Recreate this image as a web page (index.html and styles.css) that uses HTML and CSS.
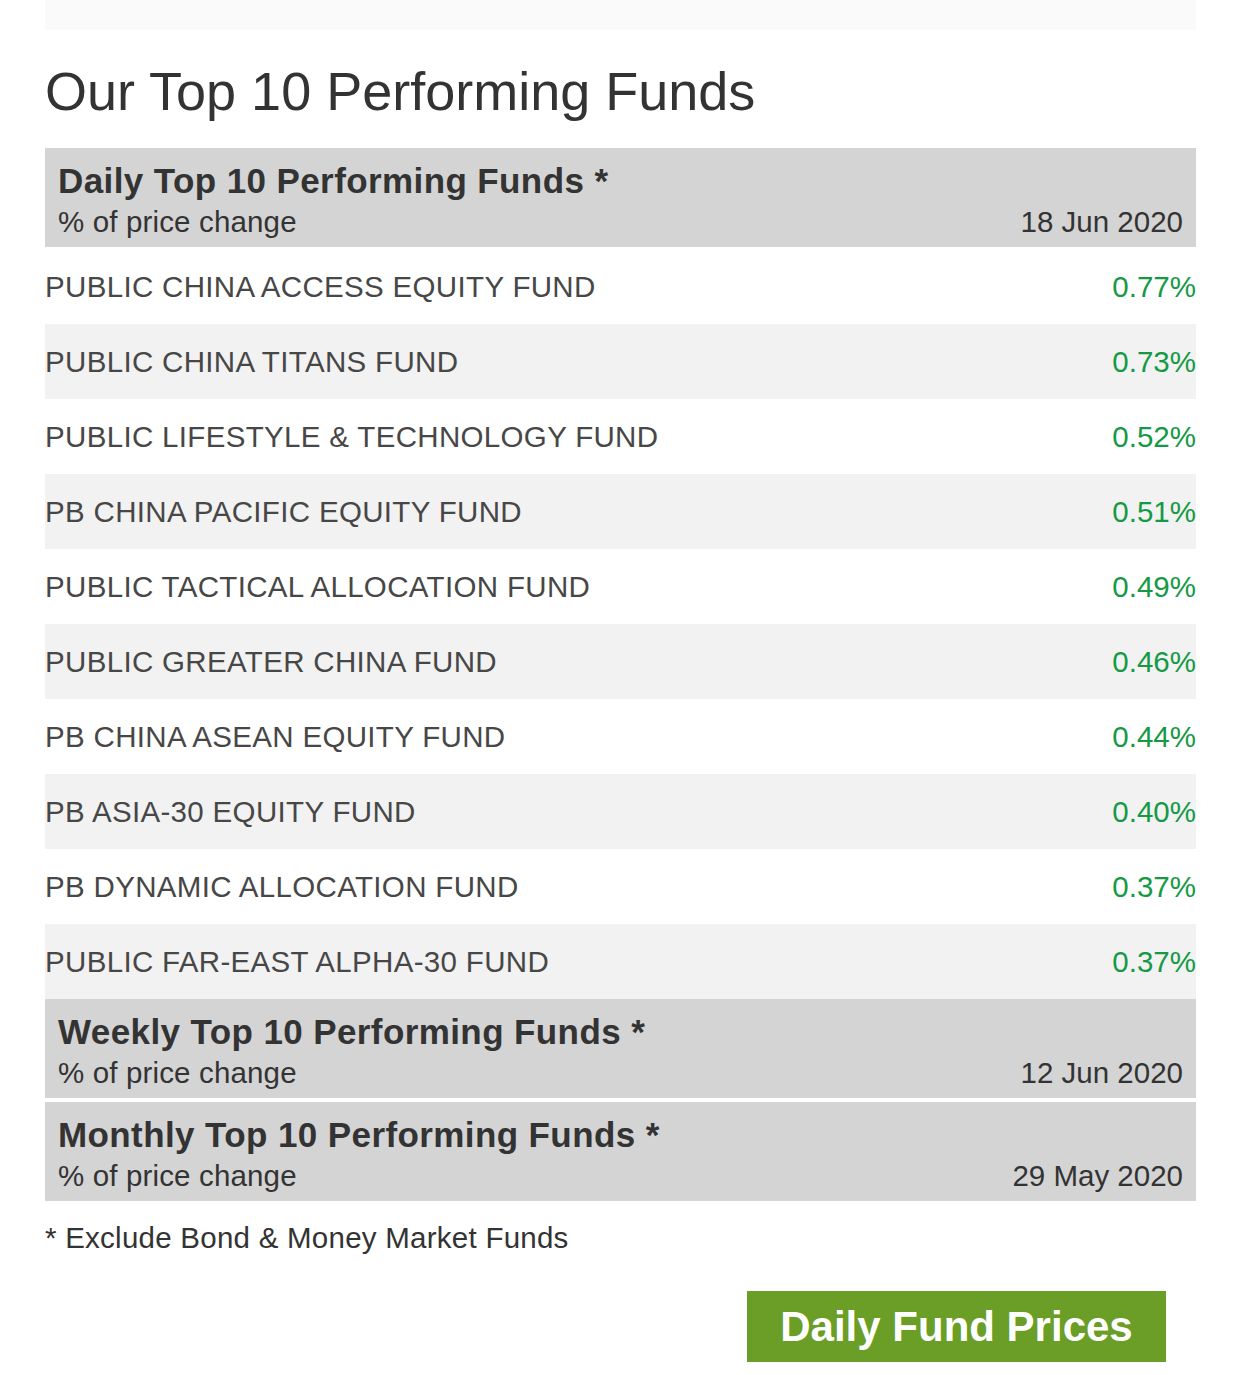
FILE: index.html
```html
<!DOCTYPE html>
<html lang="en">
<head>
<meta charset="utf-8">
<title>Our Top 10 Performing Funds</title>
<link rel="stylesheet" href="styles.css">
</head>
<body>
<div class="page">
  <div class="topbar"></div>
  <h1 class="title">Our Top 10 Performing Funds</h1>

  <section class="panel">
    <div class="panel-head">
      <div class="panel-title">Daily Top 10 Performing Funds *</div>
      <div class="panel-sub"><span class="sub-label">% of price change</span><span>18 Jun 2020</span></div>
    </div>
    <ul class="rows">
      <li class="row first"><span class="name">PUBLIC CHINA ACCESS EQUITY FUND</span><span class="val">0.77%</span></li>
      <li class="row alt"><span class="name">PUBLIC CHINA TITANS FUND</span><span class="val">0.73%</span></li>
      <li class="row"><span class="name">PUBLIC LIFESTYLE &amp; TECHNOLOGY FUND</span><span class="val">0.52%</span></li>
      <li class="row alt"><span class="name">PB CHINA PACIFIC EQUITY FUND</span><span class="val">0.51%</span></li>
      <li class="row"><span class="name">PUBLIC TACTICAL ALLOCATION FUND</span><span class="val">0.49%</span></li>
      <li class="row alt"><span class="name">PUBLIC GREATER CHINA FUND</span><span class="val">0.46%</span></li>
      <li class="row"><span class="name">PB CHINA ASEAN EQUITY FUND</span><span class="val">0.44%</span></li>
      <li class="row alt"><span class="name">PB ASIA-30 EQUITY FUND</span><span class="val">0.40%</span></li>
      <li class="row"><span class="name">PB DYNAMIC ALLOCATION FUND</span><span class="val">0.37%</span></li>
      <li class="row alt"><span class="name">PUBLIC FAR-EAST ALPHA-30 FUND</span><span class="val">0.37%</span></li>
    </ul>
  </section>

  <section class="panel">
    <div class="panel-head">
      <div class="panel-title">Weekly Top 10 Performing Funds *</div>
      <div class="panel-sub"><span class="sub-label">% of price change</span><span>12 Jun 2020</span></div>
    </div>
  </section>

  <section class="panel gap">
    <div class="panel-head">
      <div class="panel-title">Monthly Top 10 Performing Funds *</div>
      <div class="panel-sub"><span class="sub-label">% of price change</span><span>29 May 2020</span></div>
    </div>
  </section>

  <p class="note">* Exclude Bond &amp; Money Market Funds</p>

  <div class="actions">
    <a class="btn" href="#">Daily Fund Prices</a>
  </div>
</div>
</body>
</html>
```

FILE: styles.css
```css
html, body {
  margin: 0;
  padding: 0;
  background: #ffffff;
}

body {
  font-family: "Liberation Sans", Arial, Helvetica, sans-serif;
  color: #444444;
}

.page {
  padding: 0 46px 0 45px;
}

.topbar {
  height: 30px;
  background: #fafafa;
}

.title {
  margin: 31px 0 27px 0;
  font-size: 54px;
  line-height: 60px;
  font-weight: normal;
  color: #333333;
}

.panel-head {
  background: #d4d4d4;
  padding: 13px 13px 8px 13px;
  color: #333333;
}

.panel.gap {
  margin-top: 4px;
}

.panel-title {
  font-size: 35px;
  line-height: 40px;
  font-weight: bold;
  letter-spacing: 0.4px;
}

.panel-sub {
  margin-top: 4px;
  display: flex;
  justify-content: space-between;
  font-size: 29.5px;
  line-height: 34px;
}

.sub-label {
  letter-spacing: 0.15px;
}

.rows {
  list-style: none;
  margin: 0;
  padding: 0;
}

.row {
  height: 75px;
  display: flex;
  align-items: center;
  justify-content: space-between;
  font-size: 29.5px;
  background: #ffffff;
}

.row.first {
  height: 77px;
  box-sizing: border-box;
  padding-top: 2px;
}

.row.alt {
  background: #f2f2f2;
}

.name {
  color: #474747;
  letter-spacing: 0.33px;
}

.val {
  color: #149a45;
}

.note {
  margin: 20px 0 0 0;
  font-size: 29.5px;
  line-height: 34px;
  letter-spacing: 0.25px;
  color: #333333;
}

.actions {
  display: flex;
  justify-content: flex-end;
  padding-right: 30px;
  margin-top: 36px;
}

.btn {
  display: flex;
  align-items: center;
  justify-content: center;
  width: 419px;
  height: 71px;
  background: #6a9e26;
  color: #ffffff;
  font-size: 42px;
  font-weight: bold;
  text-decoration: none;
}
```
